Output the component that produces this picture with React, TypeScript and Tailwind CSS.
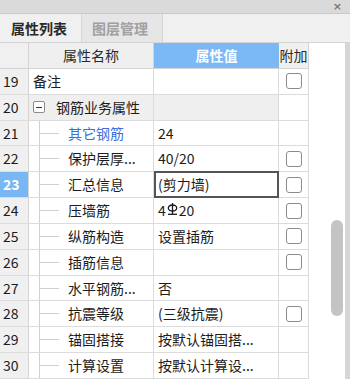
import React from 'react'

type Row = {
  no: number
  name: string
  value?: React.ReactNode
  check?: boolean
  group?: boolean
  child?: boolean
  blue?: boolean
  editing?: boolean
}

const font = { fontFamily: '"Noto Sans CJK SC", "Noto Sans", sans-serif' }

function RebarMark() {
  // 三级钢符号
  return (
    <svg width="11" height="14" viewBox="0 0 11 14" className="inline-block mx-[1px] -mt-[3px]">
      <ellipse cx="5.5" cy="6" rx="4.2" ry="3" fill="none" stroke="#1a1a1a" strokeWidth="1.3" />
      <line x1="5.5" y1="1" x2="5.5" y2="12" stroke="#1a1a1a" strokeWidth="1.3" />
      <line x1="1" y1="12.3" x2="10" y2="12.3" stroke="#1a1a1a" strokeWidth="1.3" />
    </svg>
  )
}

const rows: Row[] = [
  { no: 19, name: '备注', value: '', check: true },
  { no: 20, name: '钢筋业务属性', group: true },
  { no: 21, name: '其它钢筋', value: '24', child: true, blue: true },
  { no: 22, name: '保护层厚...', value: '40/20', child: true, check: true },
  { no: 23, name: '汇总信息', value: '(剪力墙)', child: true, check: true, editing: true },
  { no: 24, name: '压墙筋', value: <>4<RebarMark />20</>, child: true, check: true },
  { no: 25, name: '纵筋构造', value: '设置插筋', child: true, check: true },
  { no: 26, name: '插筋信息', value: '', child: true, check: true },
  { no: 27, name: '水平钢筋...', value: '否', child: true },
  { no: 28, name: '抗震等级', value: '(三级抗震)', child: true, check: true },
  { no: 29, name: '锚固搭接', value: '按默认锚固搭...', child: true },
  { no: 30, name: '计算设置', value: '按默认计算设...', child: true },
]

function Checkbox() {
  return <div className="w-[16px] h-[16px] rounded-[3px] border border-[#8c8c8c] bg-white" />
}

function TableRow({ r }: { r: Row }) {
  const sel = r.editing
  return (
    <div className="flex h-[26px] border-b border-[#dcdcdc] text-[14px] text-[#1c1c1c]">
      <div
        className={
          'w-[29px] shrink-0 flex items-center pl-[3px] border-r border-[#d4d4d4] ' +
          (sel ? 'bg-[#78b6f4] text-white font-bold' : 'bg-[#f0f0f0]')
        }
      >
        {r.no}
      </div>
      <div
        className={
          'w-[125px] shrink-0 flex items-center border-r border-[#dcdcdc] relative ' +
          (r.group ? 'bg-[#efefef]' : 'bg-white')
        }
      >
        {r.group ? (
          <>
            <div className="ml-[4px] w-[12px] h-[12px] border border-[#8a8a8a] rounded-[2px] bg-white flex items-center justify-center">
              <div className="w-[6px] h-[1px] bg-[#333]" />
            </div>
            <span className="ml-[11px]">{r.name}</span>
          </>
        ) : r.child ? (
          <>
            <div className="ml-[10px] w-[1px] self-stretch bg-[#d0d0d0]" />
            <div className="w-[19px] h-[1px] bg-[#d0d0d0]" />
            <span className={'ml-[9px] whitespace-nowrap ' + (r.blue ? 'text-[#3b6fdc]' : '')}>{r.name}</span>
          </>
        ) : (
          <span className="ml-[4px]">{r.name}</span>
        )}
      </div>
      <div
        className={
          'w-[125px] shrink-0 flex items-center whitespace-nowrap ' +
          (r.group ? 'bg-[#efefef] border-r border-[#dcdcdc]' : 'bg-white') +
          (sel ? ' border-2 border-[#555] pl-[2px] -my-[1px]' : ' pl-[4px] border-r border-[#dcdcdc]')
        }
      >
        {r.value}
      </div>
      <div className="w-[30px] shrink-0 flex items-center justify-center bg-white border-r border-[#dcdcdc]">
        {r.check && <Checkbox />}
      </div>
    </div>
  )
}

export default function App() {
  return (
    <div className="w-[350px] h-[379px] overflow-hidden bg-white flex flex-col" style={font}>
      {/* 标题栏 */}
      <div className="h-[14px] shrink-0 bg-[#dadada] border-b border-[#c9c9c9] flex items-center justify-end pr-[8px]">
        <span className="text-[11px] leading-none text-[#7a7a7a] font-bold" style={{ fontFamily: '"DejaVu Sans", sans-serif' }}>
          ×
        </span>
      </div>
      {/* 页签 */}
      <div className="h-[29px] shrink-0 flex bg-[#f0f0f0] border-b border-[#d4d4d4]">
        <div className="w-[82px] flex items-center pl-[11px] bg-[#f0f0f0] border-r border-[#d4d4d4] text-[14px] font-bold text-[#2a2a2a]">
          属性列表
        </div>
        <div className="w-[81px] flex items-center pl-[10px] bg-[#e6e6e6] border-r border-[#d4d4d4] text-[14px] font-bold text-[#a0a0a0]">
          图层管理
        </div>
        <div className="flex-1" />
      </div>
      <div className="flex flex-1 min-h-0">
        <div className="w-[309px] shrink-0 flex flex-col">
          {/* 表头 */}
          <div className="flex h-[26px] shrink-0 text-[14px] border-b border-[#d4d4d4]">
            <div className="w-[29px] bg-[#f0f0f0] border-r border-[#d4d4d4]" />
            <div className="w-[125px] bg-[#efefef] border-r border-[#d4d4d4] flex items-center justify-center text-[#2a2a2a]">
              属性名称
            </div>
            <div className="w-[125px] bg-[#7ab8f6] flex items-center justify-center text-white font-bold">
              属性值
            </div>
            <div className="w-[30px] bg-[#f0f0f0] border-r border-[#d4d4d4] flex items-center justify-center text-[#2a2a2a]">
              附加
            </div>
          </div>
          {rows.map((r) => (
            <TableRow key={r.no} r={r} />
          ))}
        </div>
        <div className="flex-1 flex bg-white">
          <div className="flex-1" />
          <div className="w-[17px] flex justify-center">
            <div className="mt-[177px] w-[12px] h-[96px] rounded-full bg-[#c4c4c4]" />
          </div>
          <div className="w-[5px] bg-[#d6d6d6]" />
        </div>
      </div>
    </div>
  )
}
